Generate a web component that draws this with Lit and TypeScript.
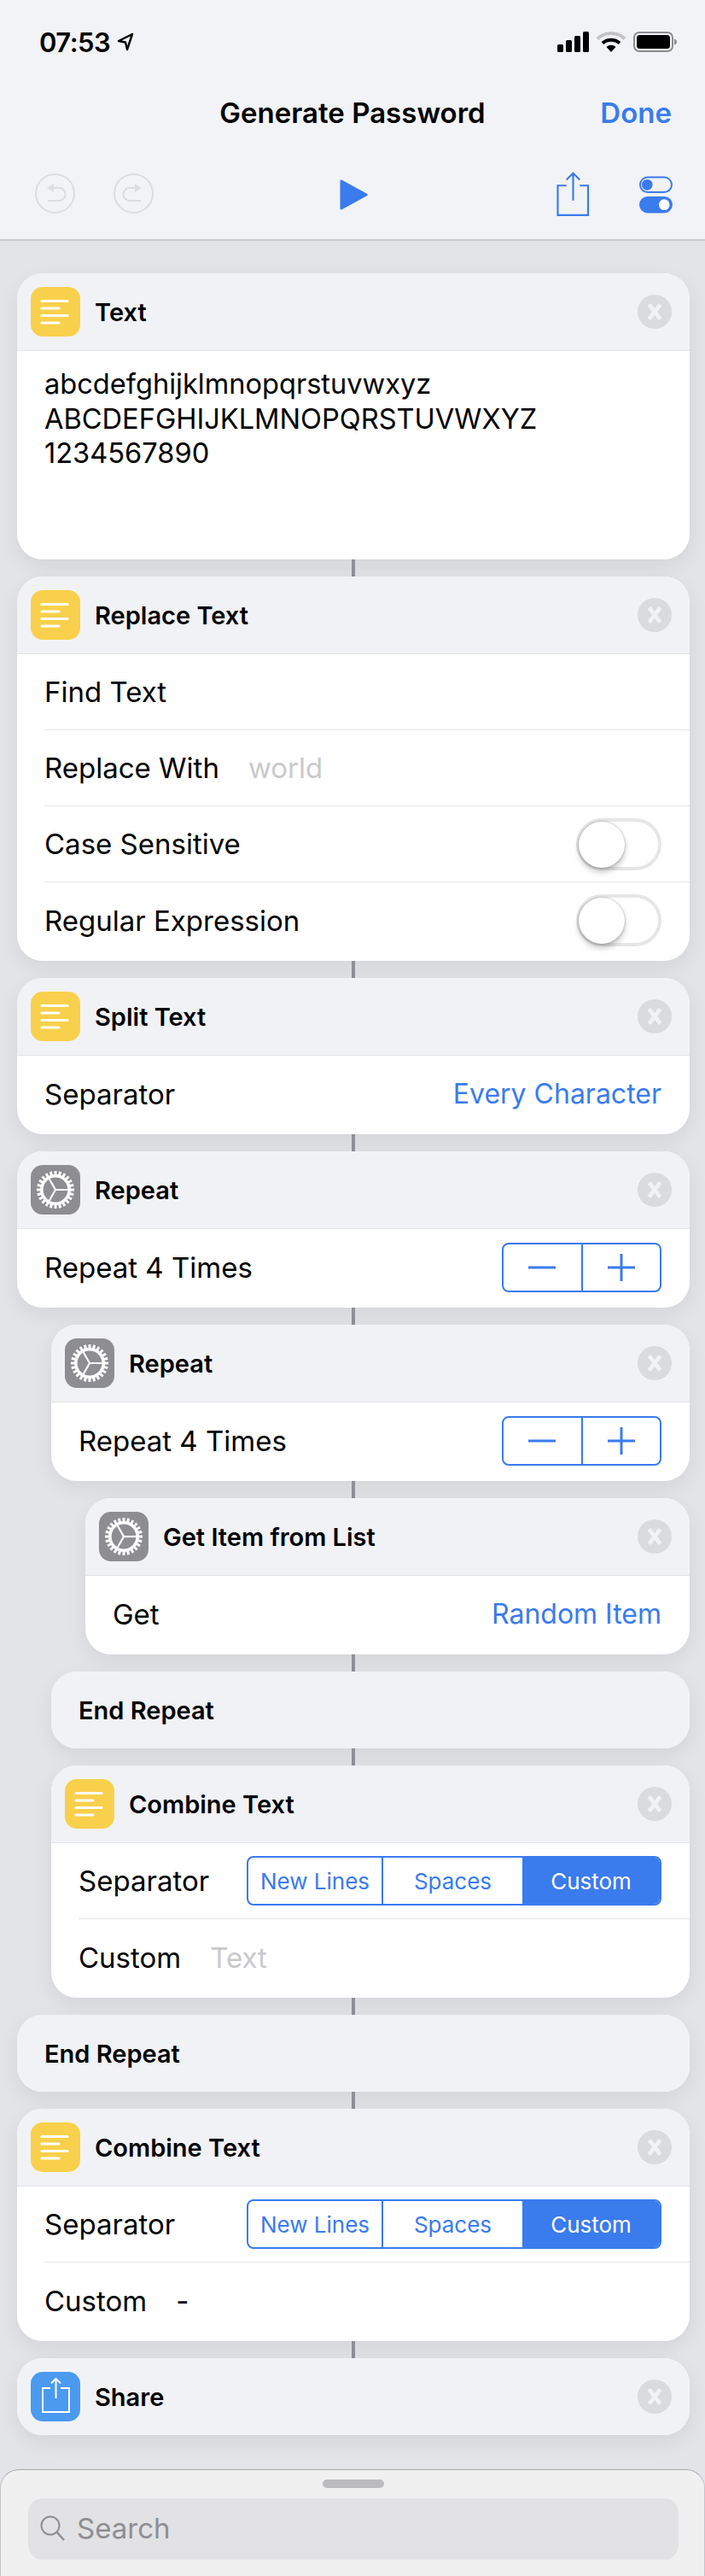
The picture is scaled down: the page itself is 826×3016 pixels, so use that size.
import { LitElement, html, css, svg } from 'lit';
import { customElement } from 'lit/decorators.js';

const BLUE = '#3a7bee';

const textIcon = html`
  <svg class="glyph" viewBox="0 0 58 58">
    <g stroke="#fff" stroke-width="3.2" stroke-linecap="round">
      <line x1="13" y1="16.5" x2="43" y2="16.5" />
      <line x1="13" y1="25" x2="33" y2="25" />
      <line x1="13" y1="33.5" x2="43" y2="33.5" />
      <line x1="13" y1="42" x2="33" y2="42" />
    </g>
  </svg>
`;

const teeth = Array.from({ length: 24 }, (_, i) => i * 15);

const gearIcon = html`
  <svg class="glyph" viewBox="0 0 58 58">
    ${teeth.map((deg) => svg`<rect x="27.5" y="7" width="3" height="6" fill="#fff" transform="rotate(${deg} 29 29)" />`)}
    <circle cx="29" cy="29" r="16.2" fill="none" stroke="#fff" stroke-width="3.6" />
    <g stroke="#fff" stroke-width="2.2">
      <line x1="29" y1="29" x2="45" y2="29" />
      <line x1="29" y1="29" x2="21" y2="15" />
      <line x1="29" y1="29" x2="21" y2="43" />
    </g>
  </svg>
`;

const shareIcon = html`
  <svg class="glyph" viewBox="0 0 58 58">
    <g fill="none" stroke="#fff" stroke-width="2">
      <path d="M23 19H14V47H45V19H35" />
      <path d="M29.5 31V8M24 13.5L29.5 8L35 13.5" />
    </g>
  </svg>
`;

@customElement('app-root')
export class AppRoot extends LitElement {
  static override styles = css`
    :host {
      --blue: #3a7bee;
      display: block;
      width: 826px;
      height: 3016px;
      overflow: hidden;
      font-family: Inter, "Liberation Sans", sans-serif;
      color: #000;
      background: #e3e4e8;
    }

    /* top chrome */
    .top {
      height: 280px;
      background: #f2f3f6;
      border-bottom: 2px solid #c9cacd;
    }
    .status {
      height: 98px;
      display: flex;
      align-items: center;
      justify-content: space-between;
      padding: 0 33px 0 46px;
    }
    .time {
      display: flex;
      align-items: center;
      gap: 8px;
      font-size: 31px;
      font-weight: 600;
      letter-spacing: -0.5px;
    }
    .status-right {
      display: flex;
      align-items: center;
      gap: 9px;
    }
    .nav {
      height: 70px;
      box-sizing: border-box;
      padding-bottom: 2px;
      position: relative;
      display: flex;
      align-items: center;
      justify-content: center;
      font-size: 33px;
      font-weight: 600;
    }
    .done {
      position: absolute;
      right: 39px;
      color: var(--blue);
    }
    .tools {
      height: 112px;
      box-sizing: border-box;
      padding: 5px 38px 0 41px;
      display: flex;
      align-items: center;
    }
    .tools svg {
      display: block;
    }
    .undo {
      display: flex;
      gap: 45px;
    }
    .play {
      margin: 3px 0 0 218px;
    }
    .tool-share {
      margin: 1px 0 0 221px;
    }
    .tool-toggle {
      margin: 3px 0 0 58px;
    }

    /* workflow */
    .flow {
      display: flex;
      flex-direction: column;
      padding: 38px 18px 0 20px;
    }
    .link {
      height: 20px;
      width: 4px;
      background: #8f9097;
      align-self: flex-start;
      margin-left: 392px;
    }
    .depth-1 {
      margin-left: 40px;
    }
    .depth-2 {
      margin-left: 80px;
    }
    .card {
      border-radius: 30px;
      background: #fff;
      overflow: hidden;
      box-shadow: 0 8px 24px rgba(0, 0, 0, 0.07);
    }
    .head {
      height: 90px;
      box-sizing: border-box;
      display: flex;
      align-items: center;
      padding: 0 21px 0 16px;
      background: #f1f2f6;
      font-size: 29px;
      font-weight: 600;
      gap: 17px;
    }
    .head.ruled {
      height: 91px;
      border-bottom: 1px solid #e2e3e6;
    }
    .head.solo {
      padding-left: 32px;
    }
    .icon {
      width: 58px;
      height: 58px;
      border-radius: 14px;
      flex: none;
    }
    .glyph {
      display: block;
      width: 58px;
      height: 58px;
    }
    .yellow {
      background: #f9d04b;
    }
    .grey {
      background: #8d8d92;
    }
    .blue {
      background: #4a9af0;
    }
    .title {
      flex: 1;
    }
    .close {
      width: 40px;
      height: 40px;
      border-radius: 50%;
      background: #d9dbde;
      flex: none;
    }
    .close svg {
      display: block;
    }
    .note {
      height: 244px;
      box-sizing: border-box;
      padding: 18px 32px 0;
      font-size: 32.6px;
      line-height: 40.5px;
    }
    .rows {
      padding-left: 32px;
    }
    .row {
      height: 89px;
      box-sizing: border-box;
      display: flex;
      align-items: center;
      padding-right: 33px;
      font-size: 33px;
      border-bottom: 1px solid #e6e6e9;
    }
    .row:last-child {
      height: 92px;
      padding-bottom: 3px;
      border-bottom: none;
    }
    .grow {
      flex: 1;
    }
    .hint {
      color: #c9c9cc;
      margin-left: 34px;
    }
    .dash {
      margin-left: 34px;
    }
    .value {
      color: var(--blue);
      font-size: 32px;
    }

    .switch {
      width: 100px;
      height: 61px;
      box-sizing: border-box;
      border-radius: 31px;
      border: 4px solid #e6e6e8;
      background: #fff;
      position: relative;
    }
    .knob {
      position: absolute;
      left: -1px;
      top: 0;
      width: 54px;
      height: 54px;
      border-radius: 50%;
      background: #fff;
      box-shadow: 0 5px 7px rgba(0, 0, 0, 0.22), 0 0 3px rgba(0, 0, 0, 0.3);
    }

    .stepper {
      width: 187px;
      height: 58px;
      box-sizing: border-box;
      display: flex;
      border: 2px solid var(--blue);
      border-radius: 8px;
    }
    .stepper div {
      flex: 1;
      display: flex;
      align-items: center;
      justify-content: center;
    }
    .stepper div + div {
      border-left: 2px solid var(--blue);
    }

    .segments {
      width: 486px;
      height: 58px;
      box-sizing: border-box;
      display: flex;
      margin-left: auto;
      border: 2px solid var(--blue);
      border-radius: 8px;
      overflow: hidden;
      font-size: 26px;
      color: var(--blue);
    }
    .segments div {
      box-sizing: border-box;
      display: flex;
      align-items: center;
      justify-content: center;
    }
    .segments .s1 {
      width: 158px;
      border-right: 2px solid var(--blue);
    }
    .segments .s2 {
      width: 163px;
    }
    .segments .s3 {
      flex: 1;
      background: var(--blue);
      color: #fff;
    }

    /* search sheet */
    .sheet {
      margin-top: 40px;
      height: 125px;
      box-sizing: border-box;
      background: #f0f0f1;
      border-top: 1px solid #a9a9ac;
      border-left: 1px solid #c4c4c6;
      border-right: 1px solid #c4c4c6;
      border-radius: 22px 22px 0 0;
      padding: 11px 30px 0 32px;
    }
    .handle {
      width: 72px;
      height: 10px;
      border-radius: 5px;
      background: #bcbcbf;
      margin: 0 auto 12px;
    }
    .search {
      height: 72px;
      box-sizing: border-box;
      padding: 0 0 3px 14px;
      border-radius: 17px;
      background: #e2e2e4;
      display: flex;
      align-items: center;
      gap: 13px;
      font-size: 33px;
      color: #8e8e93;
    }
  `;

  private closeBtn() {
    return html`
      <div class="close">
        <svg viewBox="0 0 40 40" width="40" height="40">
          <path d="M13.5 11.5L26.5 28.5M26.5 11.5L13.5 28.5" stroke="#f1f2f6" stroke-width="4.6" />
        </svg>
      </div>
    `;
  }

  private head(icon: unknown, color: string, title: string, ruled = true) {
    return html`
      <div class="head ${ruled ? 'ruled' : ''}">
        <div class="icon ${color}">${icon}</div>
        <div class="title">${title}</div>
        ${this.closeBtn()}
      </div>
    `;
  }

  private link() {
    return html`<div class="link"></div>`;
  }

  private switchRow(label: string) {
    return html`
      <div class="row">
        <span class="grow">${label}</span>
        <div class="switch"><div class="knob"></div></div>
      </div>
    `;
  }

  private stepper() {
    return html`
      <div class="stepper">
        <div>
          <svg width="32" height="32" viewBox="0 0 32 32"><path d="M0 16H32" stroke="${BLUE}" stroke-width="3" /></svg>
        </div>
        <div>
          <svg width="32" height="32" viewBox="0 0 32 32"><path d="M0 16H32M16 0V32" stroke="${BLUE}" stroke-width="3" /></svg>
        </div>
      </div>
    `;
  }

  private repeatCard(depth: string) {
    return html`
      <div class="card ${depth}">
        ${this.head(gearIcon, 'grey', 'Repeat')}
        <div class="rows">
          <div class="row">
            <span class="grow">Repeat 4 Times</span>
            ${this.stepper()}
          </div>
        </div>
      </div>
    `;
  }

  private endRepeat(depth: string) {
    return html`
      <div class="card ${depth}">
        <div class="head solo"><div class="title">End Repeat</div></div>
      </div>
    `;
  }

  private combineCard(depth: string, custom: unknown) {
    return html`
      <div class="card ${depth}">
        ${this.head(textIcon, 'yellow', 'Combine Text')}
        <div class="rows">
          <div class="row">
            <span>Separator</span>
            <div class="segments">
              <div class="s1">New Lines</div>
              <div class="s2">Spaces</div>
              <div class="s3">Custom</div>
            </div>
          </div>
          <div class="row">
            <span>Custom</span>
            ${custom}
          </div>
        </div>
      </div>
    `;
  }

  private statusBar() {
    return html`
      <div class="status">
        <div class="time">
          07:53
          <svg width="20" height="22" viewBox="0 0 20 22">
            <path d="M18 2L2 10L10 11.5L12 20Z" fill="none" stroke="#000" stroke-width="2.4" stroke-linejoin="round" />
          </svg>
        </div>
        <div class="status-right">
          <svg width="37" height="24" viewBox="0 0 37 24">
            <rect x="0" y="15" width="7" height="9" rx="1.5" />
            <rect x="10" y="10" width="7" height="14" rx="1.5" />
            <rect x="20" y="5" width="7" height="19" rx="1.5" />
            <rect x="30" y="0" width="7" height="24" rx="1.5" />
          </svg>
          <svg width="34" height="24" viewBox="0 0 34 24">
            <path d="M1 8.5A23 23 0 0 1 33 8.5" fill="none" stroke="#c4c4c6" stroke-width="4" />
            <path d="M7 13.5A15 15 0 0 1 27 13.5" fill="none" stroke="#000" stroke-width="4" />
            <path d="M11.5 18A8 8 0 0 1 22.5 18L17 24Z" />
          </svg>
          <svg width="51" height="24" viewBox="0 0 51 24">
            <rect x="1" y="1" width="45" height="22" rx="6" fill="none" stroke="#8c8c8f" stroke-width="2" />
            <rect x="4" y="4" width="39" height="16" rx="3.5" />
            <path d="M48 8.5C50 9 51 10.5 51 12S50 15 48 15.5Z" fill="#8c8c8f" />
          </svg>
        </div>
      </div>
    `;
  }

  private toolbar() {
    return html`
      <div class="tools">
        <div class="undo">
          <svg width="47" height="47" viewBox="0 0 47 47">
            <g fill="none" stroke="#dcdde0" stroke-width="2">
              <circle cx="23.5" cy="23.5" r="22.5" />
              <path d="M18 17H28A7.5 7.5 0 0 1 28 32H15" />
            </g>
            <path d="M22 12V22L14 17Z" fill="#dcdde0" />
          </svg>
          <svg width="47" height="47" viewBox="0 0 47 47">
            <g fill="none" stroke="#dcdde0" stroke-width="2">
              <circle cx="23.5" cy="23.5" r="22.5" />
              <path d="M29 17H19A7.5 7.5 0 0 0 19 32H32" />
            </g>
            <path d="M25 12V22L33 17Z" fill="#dcdde0" />
          </svg>
        </div>
        <svg class="play" width="34" height="38" viewBox="0 0 34 38">
          <path d="M2 2.5L32 19L2 35.5Z" fill="${BLUE}" stroke="${BLUE}" stroke-width="3" stroke-linejoin="round" />
        </svg>
        <svg class="tool-share" width="40" height="54" viewBox="0 0 40 54">
          <g fill="none" stroke="${BLUE}" stroke-width="2.2">
            <path d="M12 17H1.5V52.5H38V17H28" />
            <path d="M20 35V2M12 10L20 2L28 10" />
          </g>
        </svg>
        <svg class="tool-toggle" width="40" height="46" viewBox="0 0 40 46">
          <rect x="1" y="2" width="38" height="18" rx="9" fill="none" stroke="${BLUE}" stroke-width="2" />
          <circle cx="9.5" cy="11" r="6.5" fill="${BLUE}" />
          <rect x="0" y="25" width="40" height="20" rx="10" fill="${BLUE}" />
          <circle cx="30" cy="35" r="6.5" fill="#fff" />
        </svg>
      </div>
    `;
  }

  override render() {
    return html`
      <div class="top">
        ${this.statusBar()}
        <div class="nav">Generate Password<span class="done">Done</span></div>
        ${this.toolbar()}
      </div>

      <div class="flow">
        <div class="card">
          ${this.head(textIcon, 'yellow', 'Text')}
          <div class="note">
            abcdefghijklmnopqrstuvwxyz<br />ABCDEFGHIJKLMNOPQRSTUVWXYZ<br />1234567890
          </div>
        </div>
        ${this.link()}
        <div class="card">
          ${this.head(textIcon, 'yellow', 'Replace Text')}
          <div class="rows">
            <div class="row">Find Text</div>
            <div class="row"><span>Replace With</span><span class="hint">world</span></div>
            ${this.switchRow('Case Sensitive')}
            ${this.switchRow('Regular Expression')}
          </div>
        </div>
        ${this.link()}
        <div class="card">
          ${this.head(textIcon, 'yellow', 'Split Text')}
          <div class="rows">
            <div class="row"><span class="grow">Separator</span><span class="value">Every Character</span></div>
          </div>
        </div>
        ${this.link()}
        ${this.repeatCard('')}
        ${this.link()}
        ${this.repeatCard('depth-1')}
        ${this.link()}
        <div class="card depth-2">
          ${this.head(gearIcon, 'grey', 'Get Item from List')}
          <div class="rows">
            <div class="row"><span class="grow">Get</span><span class="value">Random Item</span></div>
          </div>
        </div>
        ${this.link()}
        ${this.endRepeat('depth-1')}
        ${this.link()}
        ${this.combineCard('depth-1', html`<span class="hint">Text</span>`)}
        ${this.link()}
        ${this.endRepeat('')}
        ${this.link()}
        ${this.combineCard('', html`<span class="dash">-</span>`)}
        ${this.link()}
        <div class="card">${this.head(shareIcon, 'blue', 'Share', false)}</div>
      </div>

      <div class="sheet">
        <div class="handle"></div>
        <div class="search">
          <svg width="30" height="30" viewBox="0 0 30 30">
            <circle cx="12" cy="12" r="10.5" fill="none" stroke="#8e8e93" stroke-width="2" />
            <path d="M19.5 19.5L28 29" stroke="#8e8e93" stroke-width="2.6" />
          </svg>
          Search
        </div>
      </div>
    `;
  }
}
